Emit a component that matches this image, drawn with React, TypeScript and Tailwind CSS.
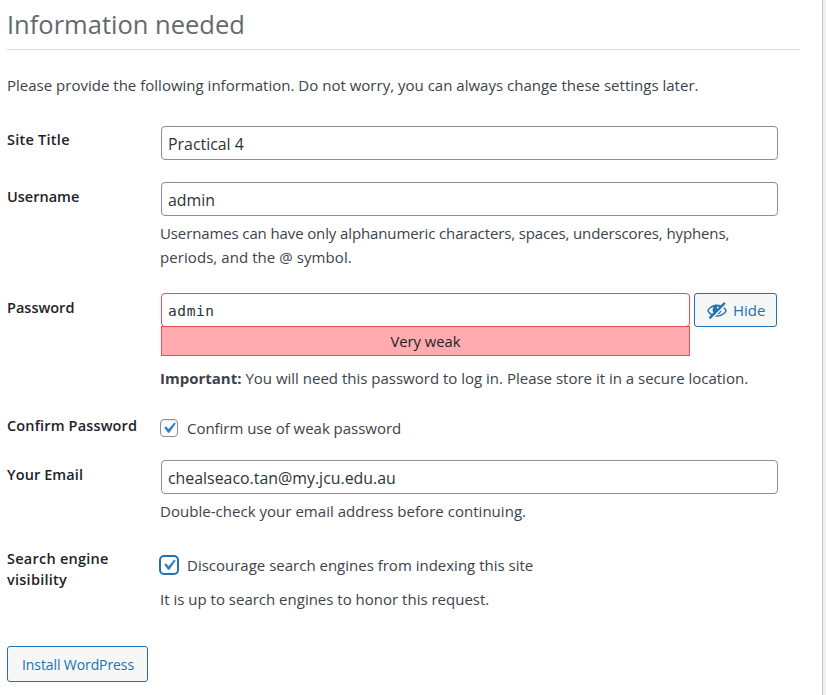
import type { ReactNode } from "react";

const inputClass =
  "block h-[34px] w-[617px] rounded-[4px] border border-[#8c8f94] bg-white pl-[6px] pr-2 pt-[2px] text-[15.9px] text-[#2c3338] outline-none";

function Row({ label, rowClass, labelClass, children }: { label: ReactNode; rowClass: string; labelClass: string; children: ReactNode }) {
  return (
    <div className={`flex ${rowClass}`}>
      <div className={`w-[153px] shrink-0 text-[14.5px] font-semibold leading-[21px] text-[#1d2327] ${labelClass}`}>{label}</div>
      <div className="min-w-0 flex-1 pl-px">{children}</div>
    </div>
  );
}

function Check({ focused = false }: { focused?: boolean }) {
  return (
    <span
      className={
        focused
          ? "-ml-px flex size-5 shrink-0 items-center justify-center rounded-[5px] border-2 border-[#2271b1] bg-white"
          : "flex size-[18px] shrink-0 items-center justify-center rounded-[4px] border border-[#8c8f94] bg-white shadow-[inset_0_1px_2px_rgba(0,0,0,0.1)]"
      }
    >
      <svg viewBox="0 0 20 20" className="-ml-px size-[22px] shrink-0" fill="#3582c4">
        <path d="M14.83 4.89l1.34.94-5.81 8.38H9.02L5.78 9.67l1.34-1.25 2.57 2.4z" />
      </svg>
    </span>
  );
}

export default function App() {
  return (
    <div className="flex h-[695px] w-[826px] overflow-hidden bg-[#f0f0f1] font-['Open_Sans','Noto_Sans',sans-serif] text-[15px] text-[#3c434a]">
      <div className="w-[823px] border-r border-[#c3c4c7] bg-white pl-[7px]">
        <h1 className="h-[50px] w-[793px] border-b border-[#dcdcde] pt-[6px] text-[25.5px] font-normal leading-[37px] text-[#646970]">Information needed</h1>
        <p className="mt-[23px] whitespace-nowrap leading-6 tracking-[0.01px]">Please provide the following information. Do not worry, you can always change these settings later.</p>

        <div className="mt-[29px]">
          <Row label="Site Title" rowClass="h-14" labelClass="pt-[3px] tracking-[0.25px]">
            <input className={inputClass} defaultValue="Practical 4" />
          </Row>
          <Row label="Username" rowClass="h-[111px]" labelClass="pt-1">
            <input className={inputClass} defaultValue="admin" />
            <p className="-ml-px mt-[5px] whitespace-nowrap leading-6">
              <span className="tracking-[-0.12px]">Usernames can have only alphanumeric characters, spaces, underscores, hyphens,</span>
              <br />
              <span className="tracking-[0.07px]">periods, and the @ symbol.</span>
            </p>
          </Row>
          <Row label="Password" rowClass="h-[121px]" labelClass="pt-1">
            <div className="flex gap-1">
              <div className="w-[529px]">
                <input
                  className="block h-[34px] w-full rounded-[4px] border border-[#e65054] bg-white pl-[6px] pt-px font-['DejaVu_Sans_Mono',monospace] text-[14.5px] tracking-[0.6px] text-[#2c3338] outline-none"
                  defaultValue="admin"
                />
                <div className="-mt-px h-[30px] border border-[#e65054] bg-[#ffabaf] text-center text-[14.8px] leading-[29px] text-[#1d2327]">
                  Very weak
                </div>
              </div>
              <button className="flex h-[34px] w-[83px] items-center rounded-[3px] border border-[#2271b1] bg-[#f6f7f7] pl-[11px] text-[#2271b1]">
                <svg viewBox="0 0 20 20" className="size-[22px] shrink-0" fill="currentColor">
                  <path d="M17.2 3.3l.16.17c.39.39.39 1.02 0 1.41L4.55 17.7c-.39.39-1.03.39-1.41 0l-.17-.17c-.39-.39-.39-1.02 0-1.41l1.59-1.6c-1.57-1-2.76-2.3-3.56-3.93.81-1.65 2.03-2.98 3.64-3.99S8.04 5.09 10 5.09c1.2 0 2.33.21 3.4.6l2.38-2.39c.39-.39 1.03-.39 1.42 0zm-7.09 4.01c-.23.25-.34.54-.34.88 0 .31.12.58.31.81l1.8-1.79c-.13-.12-.28-.21-.45-.26-.11-.01-.28-.03-.49-.04-.33.03-.6.16-.83.4zM2.4 10.59c.69 1.23 1.71 2.25 3.05 3.05l1.28-1.28c-.51-.69-.77-1.47-.77-2.36 0-1.06.36-1.98 1.09-2.76-1.04.27-1.96.7-2.76 1.26-.8.58-1.43 1.27-1.89 2.09zm13.22-2.13l.96-.96c1.02.86 1.83 1.89 2.42 3.09-.81 1.65-2.03 2.98-3.64 3.99s-3.4 1.51-5.36 1.51c-.63 0-1.24-.07-1.83-.18l1.07-1.07c.25.02.5.05.76.05 1.63 0 3.13-.4 4.5-1.21s2.4-1.84 3.1-3.09c-.46-.82-1.09-1.51-1.89-2.09-.03-.01-.06-.03-.09-.04zm-5.58 5.58l4-4c-.01 1.1-.41 2.04-1.18 2.81-.78.78-1.72 1.18-2.82 1.19z" />
                </svg>
                <span className="ml-[5px] pt-px">Hide</span>
              </button>
            </div>
            <p className="-ml-px mt-[10px] whitespace-nowrap leading-6"><b className="font-bold">Important:</b> You will need this password to log in. Please store it in a secure location.</p>
          </Row>
          <Row label="Confirm Password" rowClass="h-[46px]" labelClass="pt-px tracking-[0.15px]">
            <label className="-ml-px flex h-7 items-center gap-[9px]">
              <Check />
              <span className="pt-px tracking-[-0.03px]">Confirm use of weak password</span>
            </label>
          </Row>
          <Row label="Your Email" rowClass="h-[90px]" labelClass="pt-1 tracking-[0.1px]">
            <input className={inputClass} defaultValue="chealseaco.tan@my.jcu.edu.au" />
            <p className="-ml-px mt-[5px] leading-6 tracking-[0.03px]">Double-check your email address before continuing.</p>
          </Row>
          <Row label={<>Search engine<br />visibility</>} rowClass="h-[96px]" labelClass="-mt-[2px] tracking-[0.25px]">
            <label className="-ml-px flex h-[30px] items-center gap-2">
              <Check focused />
              <span className="pt-px">Discourage search engines from indexing this site</span>
            </label>
            <p className="-ml-px mt-[7px] leading-6">It is up to search engines to honor this request.</p>
          </Row>
        </div>
        <button className="h-9 w-[141px] whitespace-nowrap rounded-[3px] border border-[#2271b1] bg-[#f6f7f7] pl-px text-[14px] tracking-[-0.1px] text-[#2271b1]">Install WordPress</button>
      </div>
    </div>
  );
}
